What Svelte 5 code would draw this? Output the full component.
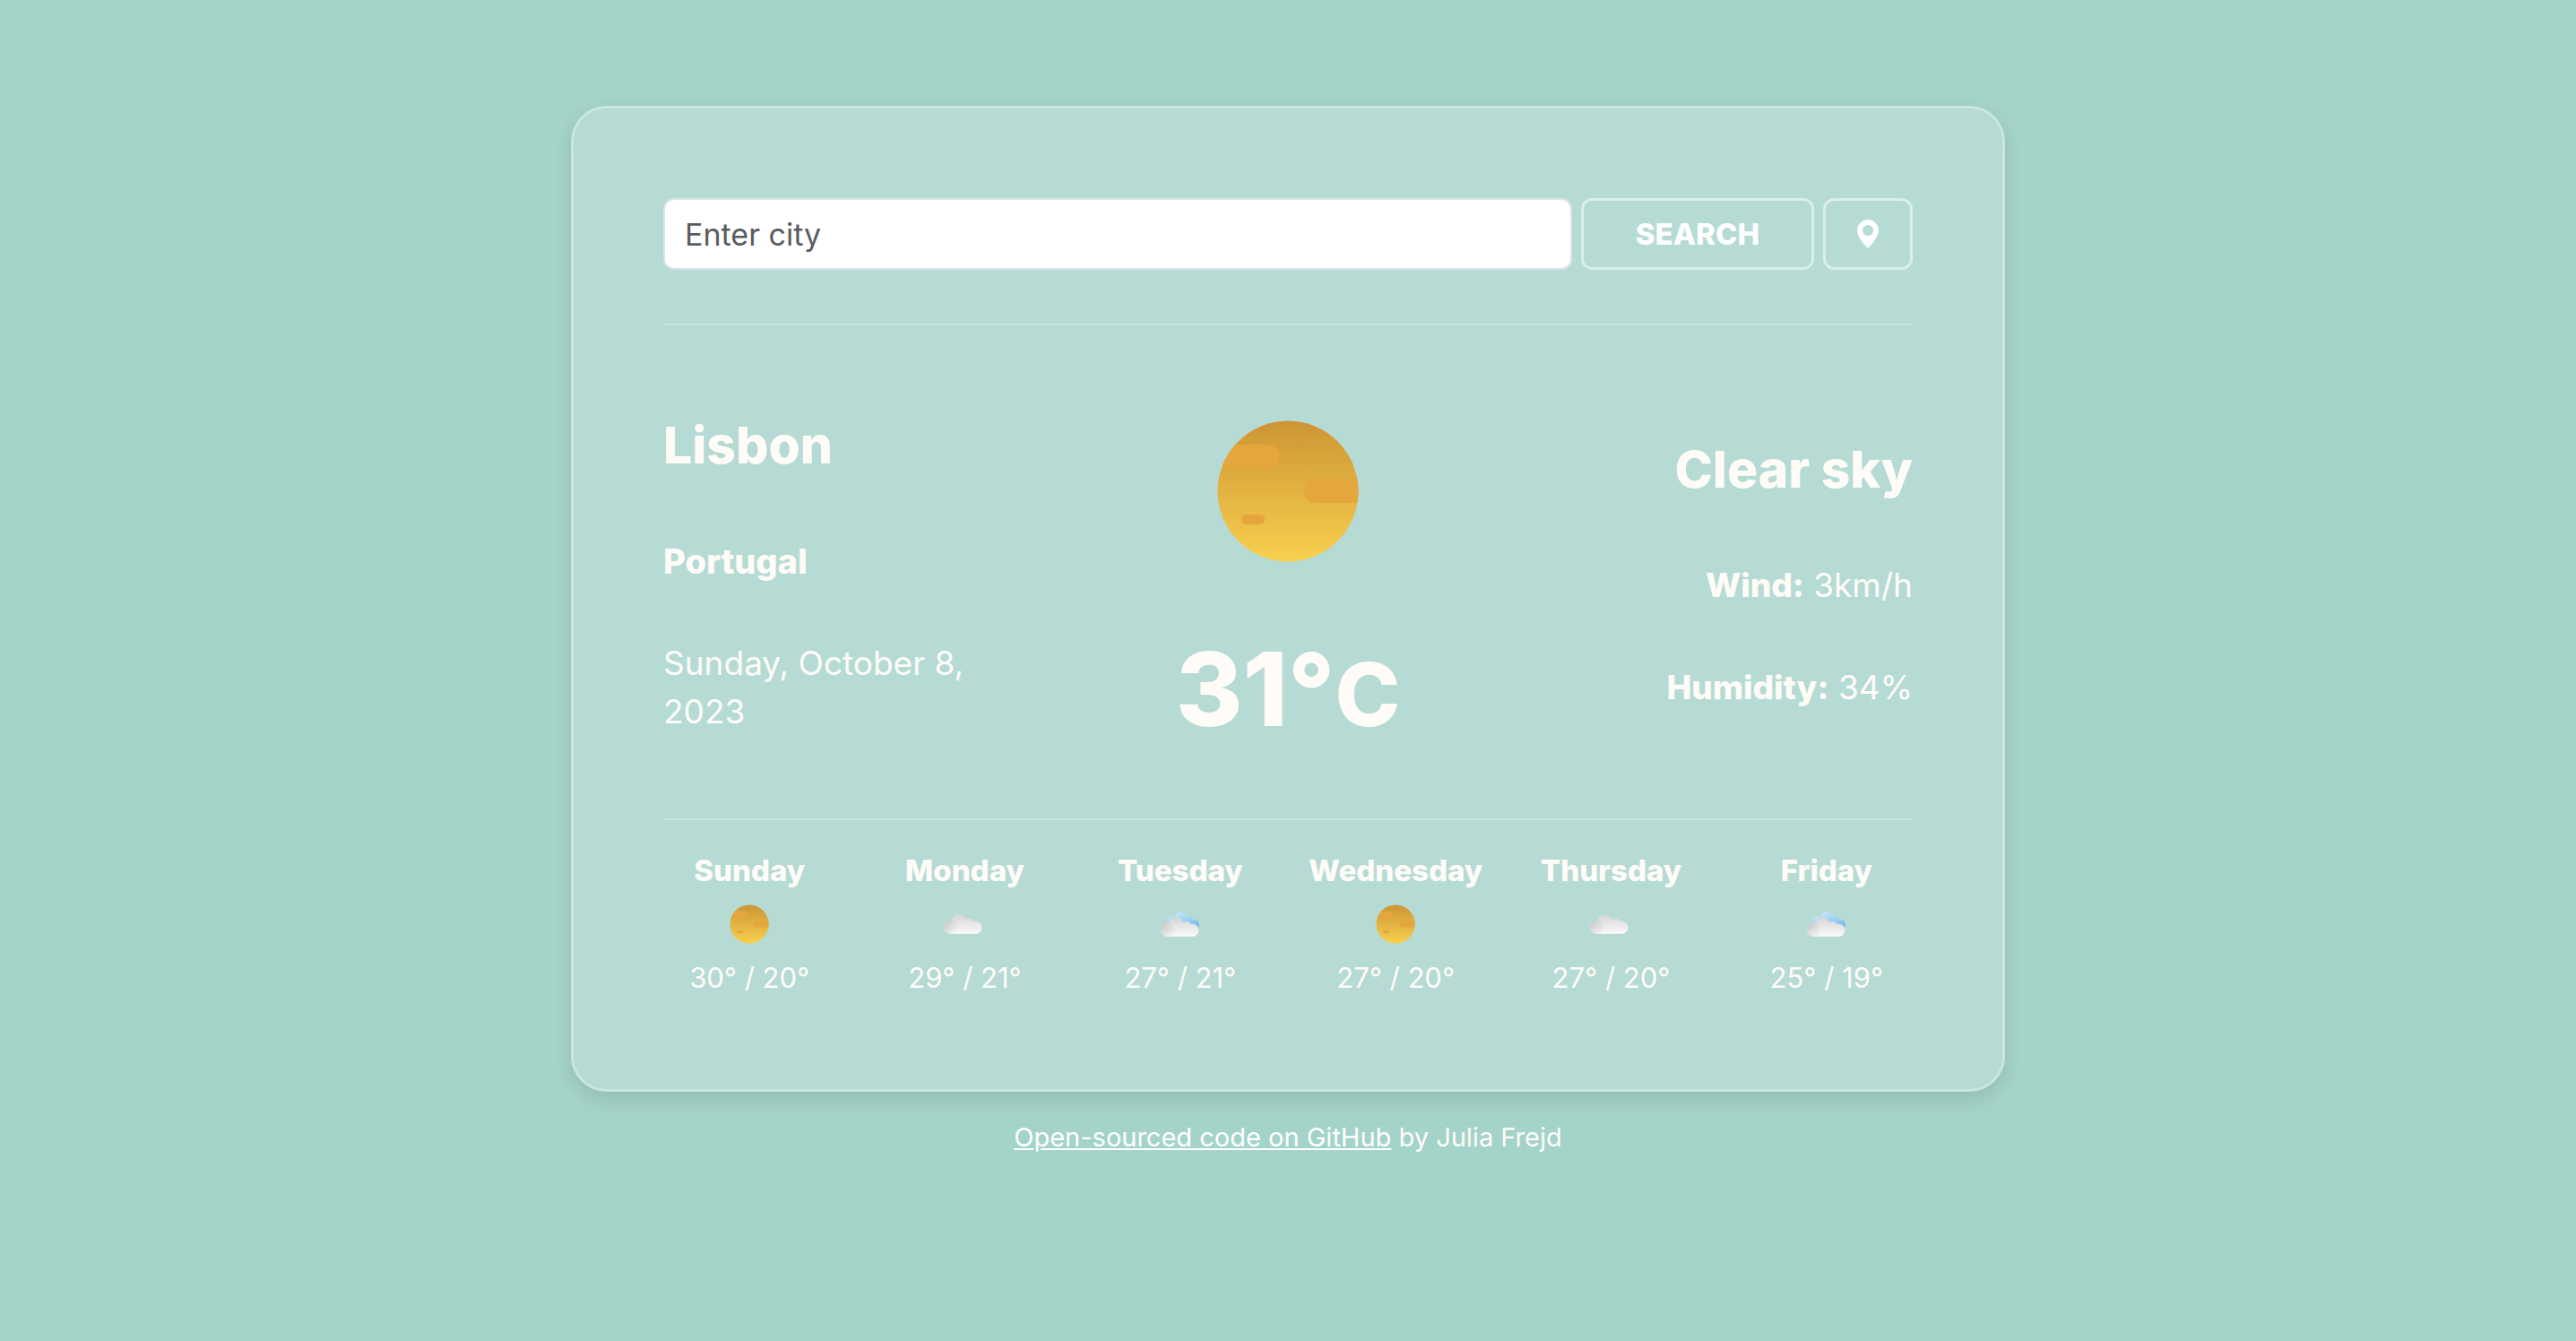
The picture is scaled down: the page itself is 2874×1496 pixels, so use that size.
<script>
  let city = $state('');

  const current = {
    city: 'Lisbon',
    country: 'Portugal',
    date: 'Sunday, October 8, 2023',
    temp: 31,
    sky: 'Clear sky',
    wind: '3km/h',
    humidity: '34%'
  };

  const forecast = [
    { day: 'Sunday', icon: 'sun', high: 30, low: 20 },
    { day: 'Monday', icon: 'cloud', high: 29, low: 21 },
    { day: 'Tuesday', icon: 'clouds', high: 27, low: 21 },
    { day: 'Wednesday', icon: 'sun', high: 27, low: 20 },
    { day: 'Thursday', icon: 'cloud', high: 27, low: 20 },
    { day: 'Friday', icon: 'clouds', high: 25, low: 19 }
  ];
</script>

<svg class="defs" width="0" height="0" aria-hidden="true">
  <defs>
    <linearGradient id="sunFill" x1="0" y1="0" x2="0" y2="1">
      <stop offset="0" stop-color="#cd9534" />
      <stop offset="1" stop-color="#f8d04f" />
    </linearGradient>
    <clipPath id="sunClip"><circle cx="80" cy="80" r="78.5" /></clipPath>
    <linearGradient id="cloudFill" gradientUnits="userSpaceOnUse" x1="0" y1="10" x2="0" y2="33">
      <stop offset="0" stop-color="#d2d2d2" />
      <stop offset="1" stop-color="#fbfbfb" />
    </linearGradient>
    <linearGradient id="puffFill" x1="0.1" y1="0.1" x2="0.9" y2="0.9">
      <stop offset="0" stop-color="#c8c8c8" />
      <stop offset="1" stop-color="#ececec" stop-opacity="0.6" />
    </linearGradient>
    <linearGradient id="blueFill" gradientUnits="userSpaceOnUse" x1="18" y1="8" x2="26" y2="30">
      <stop offset="0" stop-color="#c9e6fa" />
      <stop offset="1" stop-color="#76bbf0" />
    </linearGradient>
  </defs>
</svg>

{#snippet weatherIcon(kind)}
  {#if kind === 'sun'}
    <svg viewBox="0 0 160 160" role="img" aria-label="Clear sky">
      <circle cx="80" cy="80" r="78.5" fill="url(#sunFill)" />
      <g clip-path="url(#sunClip)" fill="#e5a63e">
        <rect x="-20" y="28" width="90" height="26" rx="12" />
        <rect x="98" y="66" width="90" height="27" rx="12" />
        <rect x="28" y="106" width="26" height="11" rx="5" />
      </g>
    </svg>
  {:else}
    <svg viewBox="0 0 44 44" role="img" aria-label={kind === 'cloud' ? 'Cloudy' : 'Scattered clouds'}>
      {#if kind === 'clouds'}
        <g fill="url(#blueFill)">
          <circle cx="22" cy="14.500" r="6.500" />
          <circle cx="12" cy="19" r="6" />
          <circle cx="31" cy="17" r="4" />
          <circle cx="37" cy="22.500" r="6" />
          <rect x="16" y="16" width="19" height="12" />
        </g>
      {/if}
      <g transform={kind === 'clouds' ? 'translate(1 3)' : undefined}>
        <g fill="url(#cloudFill)">
          <circle cx="6.600" cy="25" r="7.800" />
          <circle cx="16" cy="19.300" r="8.300" />
          <circle cx="27.700" cy="19.500" r="3.800" />
          <circle cx="34.400" cy="25.800" r="7" />
          <path d="M6.600 24L24 17L34.400 18.800V32.800H6.600z" />
        </g>
        <circle cx="6.600" cy="25" r="7.800" fill="url(#puffFill)" />
      </g>
    </svg>
  {/if}
{/snippet}

<main class="page">
  <section class="card">
    <form class="search" onsubmit={(e) => e.preventDefault()}>
      <input type="text" placeholder="Enter city" aria-label="Enter city" bind:value={city} />
      <button type="submit">SEARCH</button>
      <button type="button" aria-label="Use current location">
        <svg class="pin" viewBox="0 0 16 16" aria-hidden="true">
          <path
            fill="currentColor"
            d="M8 16s6-5.686 6-10A6 6 0 0 0 2 6c0 4.314 6 10 6 10m0-7a3 3 0 1 1 0-6 3 3 0 0 1 0 6"
          />
        </svg>
      </button>
    </form>

    <div class="current">
      <div class="place">
        <h1>{current.city}</h1>
        <h2>{current.country}</h2>
        <p>{current.date}</p>
      </div>
      <div class="now">
        <div class="now-icon">{@render weatherIcon('sun')}</div>
        <p class="temp">{current.temp}°<span>C</span></p>
      </div>
      <div class="details">
        <h1>{current.sky}</h1>
        <p class="wind"><strong>Wind:</strong> {current.wind}</p>
        <p><strong>Humidity:</strong> {current.humidity}</p>
      </div>
    </div>

    <div class="forecast">
      {#each forecast as item}
        <div class="day">
          <strong>{item.day}</strong>
          <div class="day-icon">{@render weatherIcon(item.icon)}</div>
          <span>{item.high}° / {item.low}°</span>
        </div>
      {/each}
    </div>
  </section>

  <footer>
    <a href="https://github.com">Open-sourced code on GitHub</a> by Julia Frejd
  </footer>
</main>

<style>
  :global(body) {
    background: #a4d3c9;
  }

  .defs {
    position: absolute;
  }

  .page {
    box-sizing: border-box;
    min-height: 100vh;
    padding: 118px 40px 40px;
    color: #fffcf8;
    font-family: Inter, sans-serif;
    font-size: 33px;
    line-height: 48px;
  }

  .card {
    box-sizing: border-box;
    max-width: 1600px;
    margin: 0 auto;
    padding: 100px;
    border: 3px solid #cae6e0;
    border-radius: 40px;
    background: #b6dbd4;
    box-shadow: 0 8px 20px rgba(0, 0, 0, 0.1);
  }

  h1,
  h2,
  p {
    margin: 0;
  }

  h1,
  h2,
  strong {
    font-weight: 800;
  }

  .search {
    display: grid;
    grid-template-columns: 1fr 260px 100px;
    gap: 10px;
    padding-bottom: 60px;
  }

  input,
  button {
    box-sizing: border-box;
    height: 80px;
    border-radius: 12px;
    font: inherit;
  }

  input {
    min-width: 0;
    padding: 0 22px;
    border: 2px solid #dee2e6;
    background: #fff;
    color: #212529;
    font-size: 34px;
  }

  input::placeholder {
    color: #595c5f;
    opacity: 1;
  }

  button {
    display: flex;
    align-items: center;
    justify-content: center;
    padding: 0;
    border: 3px solid #daeeea;
    background: transparent;
    color: #fff;
    font-weight: 800;
    cursor: pointer;
  }

  .pin {
    width: 32px;
    height: 32px;
  }

  .current {
    display: grid;
    grid-template-columns: repeat(3, 1fr);
    gap: 64px;
    align-items: center;
    box-sizing: border-box;
    min-height: 554px;
    padding-top: 8px;
    border-top: 2px solid #c7e4dd;
    border-bottom: 2px solid #c7e4dd;
    font-size: 37px;
    line-height: 54px;
  }

  h1 {
    margin-bottom: 68px;
    font-size: 57px;
    line-height: 68px;
  }

  h2 {
    margin-bottom: 60px;
    font-size: 38px;
  }

  .wind {
    margin-bottom: 60px;
  }

  .details {
    text-align: right;
  }

  .now {
    display: flex;
    flex-direction: column;
    align-items: center;
    gap: 44px;
  }

  .now-icon {
    display: flex;
    align-items: center;
    height: 210px;
  }

  .now-icon :global(svg) {
    width: 160px;
  }

  .temp {
    font-size: 114px;
    font-weight: 800;
    line-height: 144px;
  }

  .temp span {
    font-size: 98px;
    line-height: 1;
  }

  .forecast {
    display: grid;
    grid-template-columns: repeat(6, 1fr);
    margin: 0 -24px;
    padding-top: 32px;
  }

  .day {
    display: flex;
    flex-direction: column;
    align-items: center;
  }

  .day span {
    font-size: 31px;
  }

  .day-icon {
    display: flex;
    margin: 14px 0;
  }

  .day-icon :global(svg) {
    width: 44px;
    height: 44px;
    overflow: visible;
  }

  footer {
    margin-top: 30px;
    font-size: 29px;
    line-height: 42px;
    text-align: center;
  }

  a {
    color: #fff;
  }
</style>
